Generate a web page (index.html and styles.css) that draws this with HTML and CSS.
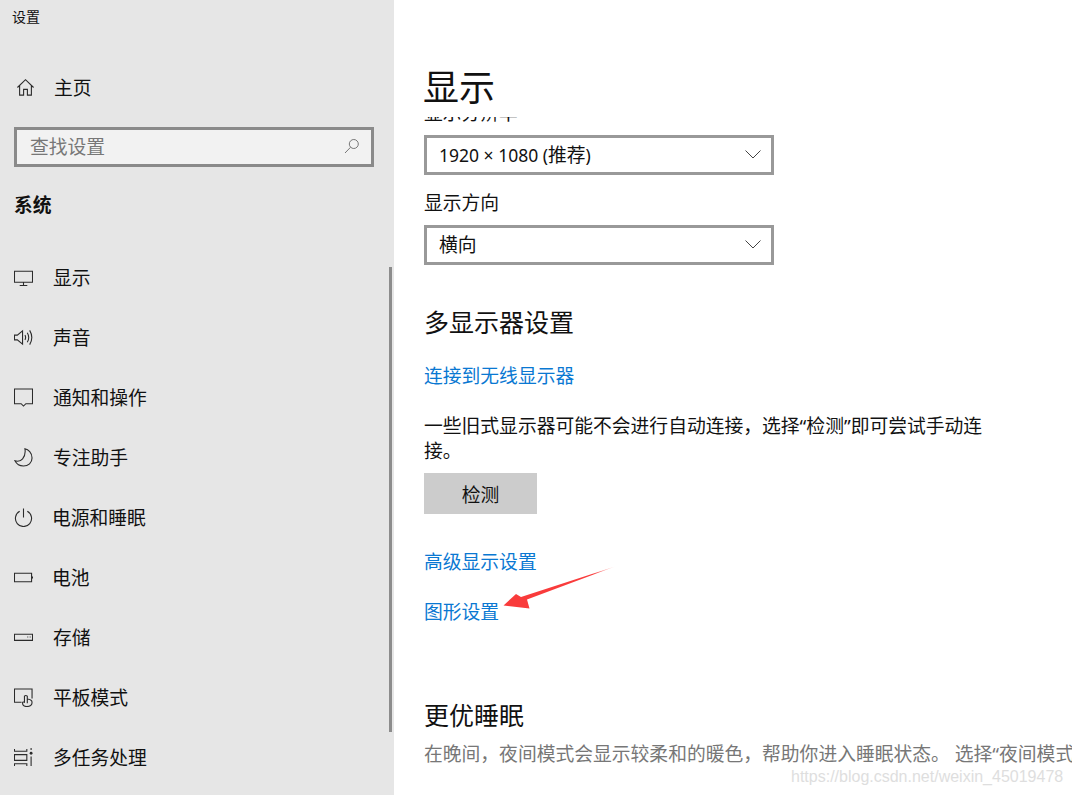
FILE: index.html
```html
<!DOCTYPE html>
<html lang="zh-CN">
<head>
<meta charset="utf-8">
<title>设置</title>
<link rel="stylesheet" href="styles.css">
</head>
<body>
<div class="app">
  <aside class="sidebar">
    <div class="app-title">设置</div>
    <div class="home">
      <svg class="icon" viewBox="0 0 20 20"><path d="M1.5 10 10 1.8 18.500 10M3.800 8v10h4.200v-6h4v6h4.200V8"/></svg>
      <span>主页</span>
    </div>
    <div class="search">
      <span>查找设置</span>
      <svg class="search-icon" viewBox="0 0 16 16"><circle cx="9.800" cy="6" r="4.500"/><path d="M6.500 9.300 1 15"/></svg>
    </div>
    <div class="group">系统</div>
    <nav class="nav">
      <div class="item"><svg class="icon" viewBox="0 0 20 20"><path d="M.5 3.500h19v11.500H.5zM10 15v3M6 18.500h8"/></svg><span>显示</span></div>
      <div class="item"><svg class="icon" viewBox="0 0 20 20"><path d="M.5 7.500h3L9 3v14l-5.500-4.500h-3zM11.500 7.500q1.500 2.500 0 5M14 5q3 5 0 10M16.500 2.500q4.500 7.500 0 15"/></svg><span>声音</span></div>
      <div class="item"><svg class="icon" viewBox="0 0 20 20"><path d="M.5 1h19v15.500h-7L10 19l-2.500-2.500h-7z"/></svg><span>通知和操作</span></div>
      <div class="item"><svg class="icon" viewBox="0 0 20 20"><path d="M11.500.8C15 1.500 19 5 19 10.500c0 5-4 8.500-9 8.500-4 0-7.500-2.500-9-5.500 6 2 12-3.500 10.500-12.700z"/></svg><span>专注助手</span></div>
      <div class="item item-power"><svg class="icon" viewBox="0 0 20 20"><path d="M6 3.500a8.500 8.500 0 1 0 8 0M10 .5V10"/></svg><span>电源和睡眠</span></div>
      <div class="item item-power"><svg class="icon" viewBox="0 0 20 20"><path d="M.5 5.500h18v9H.5zM19.500 9v2"/></svg><span>电池</span></div>
      <div class="item"><svg class="icon" viewBox="0 0 20 20"><path d="M.5 6.500h19v6.500H.5zM14 9.500h1M16.500 9.500h1"/></svg><span>存储</span></div>
      <div class="item"><svg class="icon" viewBox="0 0 20 20"><path d="M8 15H.5V1h18.500v10M14 16V8.500q-1.700-1.300-3 0V15q-2-.8-2 .8 0 3.700 4.500 3.700 5.500 0 5.500-4.500 0-3-5-3.500"/></svg><span>平板模式</span></div>
      <div class="item"><svg class="icon" viewBox="0 0 20 20"><path d="M.5 1v2.500h13V1M.5 7h13v6H.5zM.5 19v-2.500h13V19M18 9v10"/><circle class="dot" cx="18" cy="5.500" r="1.500"/><path d="M18 0v2"/></svg><span>多任务处理</span></div>
    </nav>
    <div class="scrollbar"></div>
  </aside>
  <main class="main">
    <header class="header"><h1>显示</h1></header>
    <div class="scroller">
      <div class="content">
        <div class="label">显示分辨率</div>
        <div class="select">
          <span><span class="latin">1920 × 1080 (</span>推荐<span class="latin">)</span></span>
          <svg class="chevron" viewBox="0 0 16 9"><path d="M.5.500 8 8 15.500.500"/></svg>
        </div>
        <div class="label label-next">显示方向</div>
        <div class="select">
          <span>横向</span>
          <svg class="chevron" viewBox="0 0 16 9"><path d="M.5.500 8 8 15.500.500"/></svg>
        </div>
        <h2 class="section">多显示器设置</h2>
        <a class="link link-first">连接到无线显示器</a>
        <p class="text">一些旧式显示器可能不会进行自动连接，选择“检测”即可尝试手动连接。</p>
        <div class="button">检测</div>
        <a class="link link-adv">高级显示设置</a>
        <a class="link link-gfx">图形设置</a>
        <h2 class="section section-sleep">更优睡眠</h2>
        <p class="muted">在晚间，夜间模式会显示较柔和的暖色，帮助你进入睡眠状态。 选择“夜间模式</p>
      </div>
    </div>
    <svg class="arrow" viewBox="0 0 124 50"><defs><linearGradient id="g" x1="0" x2="1"><stop offset="0" stop-color="#f93b3b"/><stop offset=".8" stop-color="#f93b3b"/><stop offset="1" stop-color="#f93b3b" stop-opacity=".15"/></linearGradient></defs><path fill="url(#g)" d="M112 .500 24 33.500 26.500 42.500 .5 39.500 13 28 18 31z"/></svg>
    <div class="watermark">https://blog.csdn.net/weixin_45019478</div>
  </main>
</div>
</body>
</html>
```
FILE: styles.css
```css
* { box-sizing: border-box; }
html, body { margin: 0; height: 100%; }
body { font-family: "Noto Sans", "Noto Sans CJK SC", "Liberation Sans", sans-serif; overflow: hidden; background: #fff; color: #111; }
.app { display: flex; width: 1072px; height: 795px; overflow: hidden; }

.sidebar { position: relative; width: 394px; flex: none; height: 795px; overflow: hidden; background: #e6e6e6; }
.app-title { font-size: 14px; line-height: 18px; padding: 8px 0 0 12px; color: #111; height: 57px; }
.home { display: flex; align-items: center; height: 60px; padding-left: 16px; font-size: 18.800px; }
.home .icon { margin-right: 19px; }
.icon { width: 19px; height: 19px; flex: none; fill: none; stroke: #2b2b2b; stroke-width: 1.150; }
.icon .dot { fill: #2b2b2b; stroke: none; }
.search { display: flex; align-items: center; justify-content: space-between; width: 360px; height: 40px; margin: 10px 0 0 14px; padding: 0 11px 2px 13px; border: 3px solid #8a8a8a; background: #f2f2f2; color: #777; font-size: 18.800px; }
.search-icon { width: 16px; height: 16px; fill: none; stroke: #777; stroke-width: 1; }
.group { margin: 25px 0 0 14px; height: 27px; font-size: 18.800px; line-height: 27px; font-weight: 700; color: #111; }
.nav { margin-top: 28px; }
.item { display: flex; align-items: center; height: 60px; padding-left: 14px; font-size: 18.800px; }
.item .icon { margin-right: 20px; }
.item-power span { margin-left: -1px; }
.scrollbar { position: absolute; left: 389px; top: 267px; width: 3px; height: 465px; background: #8c8c8c; }

.main { position: relative; flex: 1; display: flex; flex-direction: column; height: 795px; overflow: hidden; background: #fff; }
.header { height: 117px; flex: none; padding: 63px 0 0 29px; }
.header h1 { margin: 0; font-size: 36px; line-height: 50px; font-weight: 400; color: #111; }
.scroller { flex: 1; overflow: hidden; }
.content { margin-top: -19px; padding-left: 30px; width: 678px; }
.label { height: 30px; font-size: 18.800px; line-height: 30px; color: #111; }
.label-next { margin-top: 13px; }
.select { display: flex; align-items: center; justify-content: space-between; width: 350px; height: 40px; margin-top: 7px; padding: 0 10px 2px 12px; border: 3px solid #999; font-size: 18.800px; color: #111; background: #fff; }
.label-next + .select { margin-top: 7px; }
.latin { font-size: 17.500px; }
.chevron { width: 16px; height: 9px; fill: none; stroke: #444; stroke-width: 1; }
.section { margin: 39px 0 0; font-size: 25px; line-height: 36px; font-weight: 400; color: #111; }
.link { display: block; font-size: 18.800px; line-height: 28px; color: #0a78d2; }
.link-first { margin-top: 22px; }
.text { width: 575px; margin: 24px 0 0; font-size: 18.800px; line-height: 25px; color: #111; }
.button { display: flex; align-items: center; justify-content: center; width: 113px; height: 41px; margin-top: 9px; background: #ccc; font-size: 18.800px; color: #111; }
.link-adv { margin-top: 34px; }
.link-gfx { margin-top: 22px; }
.section-sleep { margin-top: 71px; }
.muted { margin: 7px 0 0; font-size: 18.800px; line-height: 28px; color: #777; white-space: nowrap; }

.arrow { position: absolute; left: 109px; top: 566px; width: 124px; height: 50px; }
.watermark { position: absolute; left: 397px; top: 766px; font-family: "Liberation Sans", sans-serif; font-size: 16px; line-height: 22px; color: #dedede; white-space: nowrap; }
```
